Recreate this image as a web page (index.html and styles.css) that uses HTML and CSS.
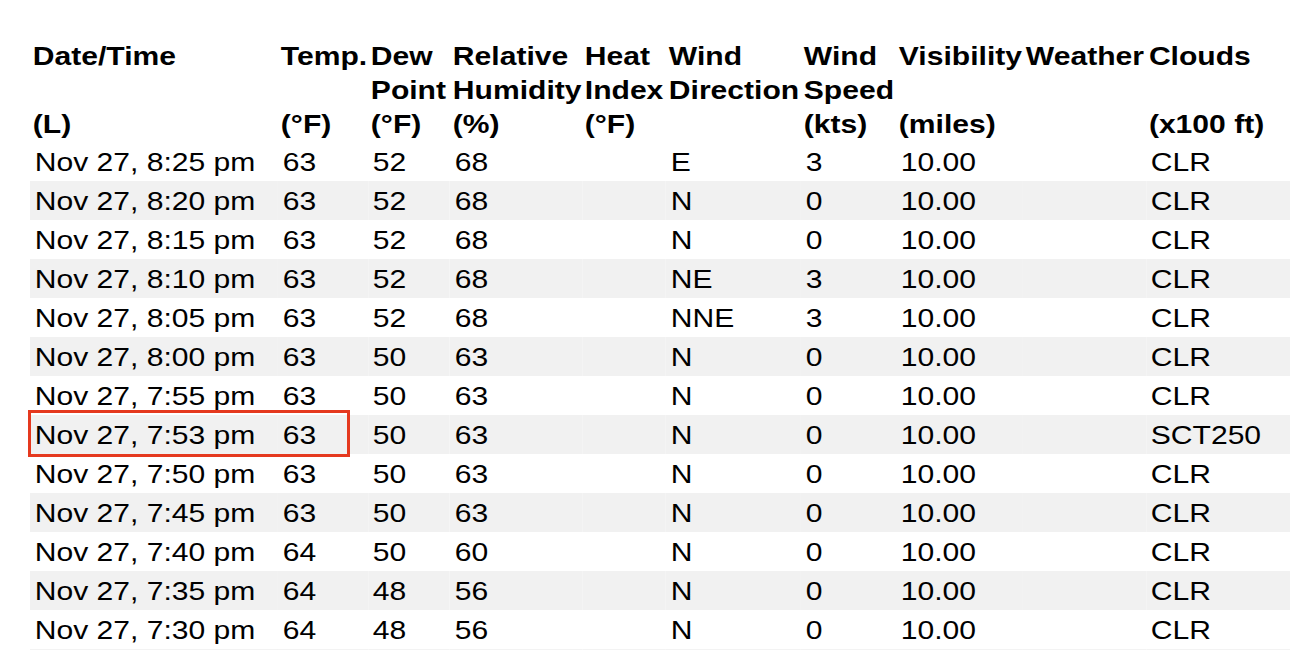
FILE: index.html
```html
<!DOCTYPE html>
<html lang="en">
<head>
<meta charset="utf-8">
<title>Observations</title>
<link rel="stylesheet" href="styles.css">
</head>
<body>
<div class="wrap">
  <table class="obs">
    <colgroup>
      <col class="c-date"><col class="c-temp"><col class="c-dew"><col class="c-rh"><col class="c-heat">
      <col class="c-wdir"><col class="c-wspd"><col class="c-vis"><col class="c-wx"><col class="c-cld">
    </colgroup>
    <thead>
      <tr class="h1">
        <th>Date/Time</th><th>Temp.</th><th>Dew<br>Point</th><th>Relative<br>Humidity</th><th>Heat<br>Index</th>
        <th>Wind<br>Direction</th><th>Wind<br>Speed</th><th>Visibility</th><th>Weather</th><th>Clouds</th>
      </tr>
      <tr class="h2">
        <th>(L)</th><th>(°F)</th><th>(°F)</th><th>(%)</th><th>(°F)</th>
        <th></th><th>(kts)</th><th>(miles)</th><th></th><th>(x100 ft)</th>
      </tr>
    </thead>
    <tbody>
      <tr><td>Nov 27, 8:25 pm</td><td>63</td><td>52</td><td>68</td><td></td><td>E</td><td>3</td><td>10.00</td><td></td><td>CLR</td></tr>
      <tr><td>Nov 27, 8:20 pm</td><td>63</td><td>52</td><td>68</td><td></td><td>N</td><td>0</td><td>10.00</td><td></td><td>CLR</td></tr>
      <tr><td>Nov 27, 8:15 pm</td><td>63</td><td>52</td><td>68</td><td></td><td>N</td><td>0</td><td>10.00</td><td></td><td>CLR</td></tr>
      <tr><td>Nov 27, 8:10 pm</td><td>63</td><td>52</td><td>68</td><td></td><td>NE</td><td>3</td><td>10.00</td><td></td><td>CLR</td></tr>
      <tr><td>Nov 27, 8:05 pm</td><td>63</td><td>52</td><td>68</td><td></td><td>NNE</td><td>3</td><td>10.00</td><td></td><td>CLR</td></tr>
      <tr><td>Nov 27, 8:00 pm</td><td>63</td><td>50</td><td>63</td><td></td><td>N</td><td>0</td><td>10.00</td><td></td><td>CLR</td></tr>
      <tr><td>Nov 27, 7:55 pm</td><td>63</td><td>50</td><td>63</td><td></td><td>N</td><td>0</td><td>10.00</td><td></td><td>CLR</td></tr>
      <tr><td>Nov 27, 7:53 pm</td><td>63</td><td>50</td><td>63</td><td></td><td>N</td><td>0</td><td>10.00</td><td></td><td>SCT250</td></tr>
      <tr><td>Nov 27, 7:50 pm</td><td>63</td><td>50</td><td>63</td><td></td><td>N</td><td>0</td><td>10.00</td><td></td><td>CLR</td></tr>
      <tr><td>Nov 27, 7:45 pm</td><td>63</td><td>50</td><td>63</td><td></td><td>N</td><td>0</td><td>10.00</td><td></td><td>CLR</td></tr>
      <tr><td>Nov 27, 7:40 pm</td><td>64</td><td>50</td><td>60</td><td></td><td>N</td><td>0</td><td>10.00</td><td></td><td>CLR</td></tr>
      <tr><td>Nov 27, 7:35 pm</td><td>64</td><td>48</td><td>56</td><td></td><td>N</td><td>0</td><td>10.00</td><td></td><td>CLR</td></tr>
      <tr><td>Nov 27, 7:30 pm</td><td>64</td><td>48</td><td>56</td><td></td><td>N</td><td>0</td><td>10.00</td><td></td><td>CLR</td></tr>
    </tbody>
  </table>
  <div class="highlight"></div>
</div>
</body>
</html>
```

FILE: styles.css
```css
html, body {
  margin: 0;
  padding: 0;
  background: #ffffff;
  overflow: hidden;
}

body {
  font-family: "Liberation Sans", Arial, Helvetica, sans-serif;
  color: #000;
}

.wrap {
  position: relative;
  padding-top: 37px;
  padding-left: 30px;
}

.obs {
  table-layout: fixed;
  border-collapse: collapse;
  border-spacing: 0;
  width: 1072.5px;
  font-size: 25.6px;
  line-height: 34px;
  transform: scaleX(1.175);
  transform-origin: left top;
}

.c-date { width: 211.1px; }
.c-temp { width: 76.6px; }
.c-dew  { width: 69.8px; }
.c-rh   { width: 112.3px; }
.c-heat { width: 71.5px; }
.c-wdir { width: 114.9px; }
.c-wspd { width: 80.9px; }
.c-vis  { width: 108.1px; }
.c-wx   { width: 104.7px; }
.c-cld  { width: 122.6px; }

.obs th {
  font-weight: bold;
  text-align: left;
  vertical-align: top;
  white-space: nowrap;
  padding: 0 0 0 2.4px;
}

.obs .h1 th {
  padding-top: 2px;
}

.obs .h2 th {
  padding-bottom: 1px;
}

.obs td {
  white-space: nowrap;
  padding: 3px 0 2px 4px;
}

.obs tbody tr:nth-child(even) td {
  background: #f1f1f1;
}

.obs tbody tr:last-child td {
  border-bottom: 2px solid #f3f3f3;
}

.highlight {
  position: absolute;
  left: 28px;
  top: 410px;
  width: 316px;
  height: 41px;
  border: 3px solid #e5391f;
  pointer-events: none;
}
```
